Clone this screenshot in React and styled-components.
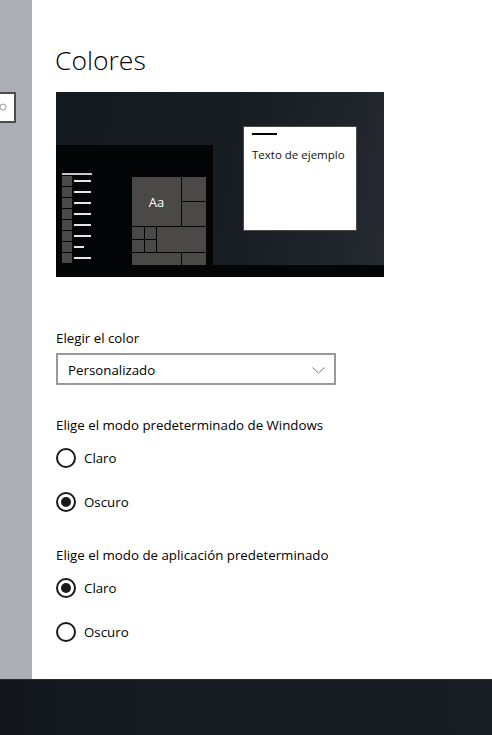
import React from 'react';
import styled, { createGlobalStyle } from 'styled-components';

const Global = createGlobalStyle`
  html, body { margin: 0; padding: 0; }
  body { font-family: "Open Sans", "Noto Sans", sans-serif; color: #000; background: #fff; }
`;

const Screen = styled.div`
  width: 492px;
  height: 735px;
  display: flex;
  flex-direction: column;
  overflow: hidden;
`;

const Body = styled.div`
  flex: 1;
  display: flex;
`;

const Sidebar = styled.div`
  width: 32px;
  background: #abaeb4;
  overflow: hidden;
  display: flex;
  justify-content: flex-end;
  align-items: flex-start;
  padding-top: 92px;
  padding-right: 16px;
  box-sizing: border-box;
`;

const SearchBox = styled.div`
  flex: 0 0 200px;
  height: 31px;
  box-sizing: border-box;
  background: #fff;
  border: 2px solid #4c4c4c;
  display: flex;
  align-items: center;
  justify-content: flex-end;
  padding-right: 7px;
`;

const Main = styled.main`
  flex: 1;
  background: #fff;
  padding: 42px 0 0 24px;
`;

const Title = styled.h1`
  margin: 0 0 14px -1px;
  font-family: "Open Sans", sans-serif;
  font-weight: 300;
  font-size: 26.5px;
  line-height: 36px;
  color: #000;
`;

const Preview = styled.div`
  width: 328px;
  height: 185px;
  display: flex;
  flex-direction: column;
  background: linear-gradient(100deg, #141920 0%, #181d24 55%, #252a31 100%);
`;

const Desktop = styled.div`
  flex: 1;
  display: flex;
  align-items: flex-start;
`;

const StartMenu = styled.div`
  align-self: flex-end;
  width: 157px;
  height: 120px;
  background: #040506;
  box-sizing: border-box;
  padding: 28px 0 0 6px;
  display: flex;
  gap: 40px;
  overflow: hidden;
`;

const HeadLine = styled.div`
  width: 30px;
  height: 2px;
  background: #c9c9c9;
`;

const AppList = styled.div`
  display: flex;
  flex-direction: column;
  gap: 1px;
`;

const AppRow = styled.div`
  display: flex;
  align-items: center;
  gap: 2px;
  &:first-of-type { margin-top: 3px; }
`;

const AppIcon = styled.div`
  width: 10px;
  height: 10px;
  background: #4b4946;
`;

const AppName = styled.div`
  width: ${p => p.$w}px;
  height: 2px;
  background: #e6e6e6;
`;

const TileGroup = styled.div`
  display: flex;
  flex-direction: column;
`;

const TileGrid = styled.div`
  margin-top: 4px;
  width: 74px;
  display: grid;
  grid-template-columns: repeat(6, 1fr);
  grid-auto-rows: 11.6px;
  gap: 1px;
`;

const Tile = styled.div`
  background: #4b4946;
  grid-column: span ${p => p.$c || 1};
  grid-row: span ${p => p.$r || 1};
  display: flex;
  align-items: center;
  justify-content: center;
  color: #fff;
  font-size: 13px;
  font-family: "Open Sans", sans-serif;
`;

const SampleWindow = styled.div`
  margin: 34px 0 0 30px;
  width: 114px;
  height: 105px;
  box-sizing: border-box;
  background: #fff;
  border: 1px solid #4a4a4a;
  padding: 6px 0 0 8px;
`;

const WinBar = styled.div`
  width: 25px;
  height: 2px;
  background: #000;
`;

const WinText = styled.div`
  margin-top: 12px;
  font-size: 11.5px;
  line-height: 16px;
  color: #111;
`;

const PreviewTaskbar = styled.div`
  height: 12px;
  background: #040506;
`;

const Label = styled.div`
  font-size: 13.3px;
  line-height: 20px;
  color: #000;
  margin-top: ${p => p.$mt}px;
`;

const Select = styled.div`
  margin-top: 5px;
  width: 280px;
  height: 32px;
  box-sizing: border-box;
  border: 2px solid #999;
  display: flex;
  align-items: center;
  justify-content: space-between;
  padding: 2px 9px 0 10px;
  font-size: 13.3px;
`;

const Radios = styled.div`
  margin-top: 13px;
  display: flex;
  flex-direction: column;
  gap: 24px;
`;

const RadioRow = styled.label`
  display: flex;
  align-items: center;
  gap: 8px;
  height: 20px;
  font-size: 13.3px;
`;

const RadioCircle = styled.span`
  width: 20px;
  height: 20px;
  box-sizing: border-box;
  border: 2px solid #1a1a1a;
  border-radius: 50%;
  display: flex;
  align-items: center;
  justify-content: center;
  &::after {
    content: '';
    display: ${p => (p.$on ? 'block' : 'none')};
    width: 10px;
    height: 10px;
    border-radius: 50%;
    background: #1a1a1a;
  }
`;

const Taskbar = styled.div`
  height: 56px;
  background: linear-gradient(90deg, #13171d 0%, #171c23 50%, #181d24 100%);
  border-top: 1px solid #262b33;
  box-sizing: border-box;
`;

const appLines = [17, 17, 17, 17, 17, 17, 10, 17];

function Radio({ on, children }) {
  return (
    <RadioRow>
      <RadioCircle $on={on} />
      {children}
    </RadioRow>
  );
}

export default function App() {
  return (
    <>
      <Global />
      <Screen>
        <Body>
          <Sidebar>
            <SearchBox>
              <svg width="8" height="9" viewBox="0 0 8 9">
                <circle cx="4" cy="4" r="3" fill="none" stroke="#999" strokeWidth="1" />
              </svg>
            </SearchBox>
          </Sidebar>
          <Main>
            <Title>Colores</Title>
            <Preview>
              <Desktop>
                <StartMenu>
                  <AppList>
                    <HeadLine />
                    {appLines.map((w, i) => (
                      <AppRow key={i}>
                        <AppIcon />
                        <AppName $w={w} />
                      </AppRow>
                    ))}
                  </AppList>
                  <TileGroup>
                    <HeadLine />
                    <TileGrid>
                      <Tile $c={4} $r={4}>Aa</Tile>
                      <Tile $c={2} $r={2} />
                      <Tile $c={2} $r={2} />
                      <Tile />
                      <Tile />
                      <Tile $c={4} $r={2} />
                      <Tile />
                      <Tile />
                      <Tile $c={4} $r={2} />
                      <Tile $c={2} $r={2} />
                    </TileGrid>
                  </TileGroup>
                </StartMenu>
                <SampleWindow>
                  <WinBar />
                  <WinText>Texto de ejemplo</WinText>
                </SampleWindow>
              </Desktop>
              <PreviewTaskbar />
            </Preview>

            <Label $mt={51}>Elegir el color</Label>
            <Select>
              Personalizado
              <svg width="13" height="7" viewBox="0 0 13 7">
                <path d="M0.5 0.5 L6.5 6 L12.5 0.5" fill="none" stroke="#777" strokeWidth="1" />
              </svg>
            </Select>

            <Label $mt={30}>Elige el modo predeterminado de Windows</Label>
            <Radios>
              <Radio>Claro</Radio>
              <Radio on>Oscuro</Radio>
            </Radios>

            <Label $mt={33}>Elige el modo de aplicación predeterminado</Label>
            <Radios>
              <Radio on>Claro</Radio>
              <Radio>Oscuro</Radio>
            </Radios>
          </Main>
        </Body>
        <Taskbar />
      </Screen>
    </>
  );
}
